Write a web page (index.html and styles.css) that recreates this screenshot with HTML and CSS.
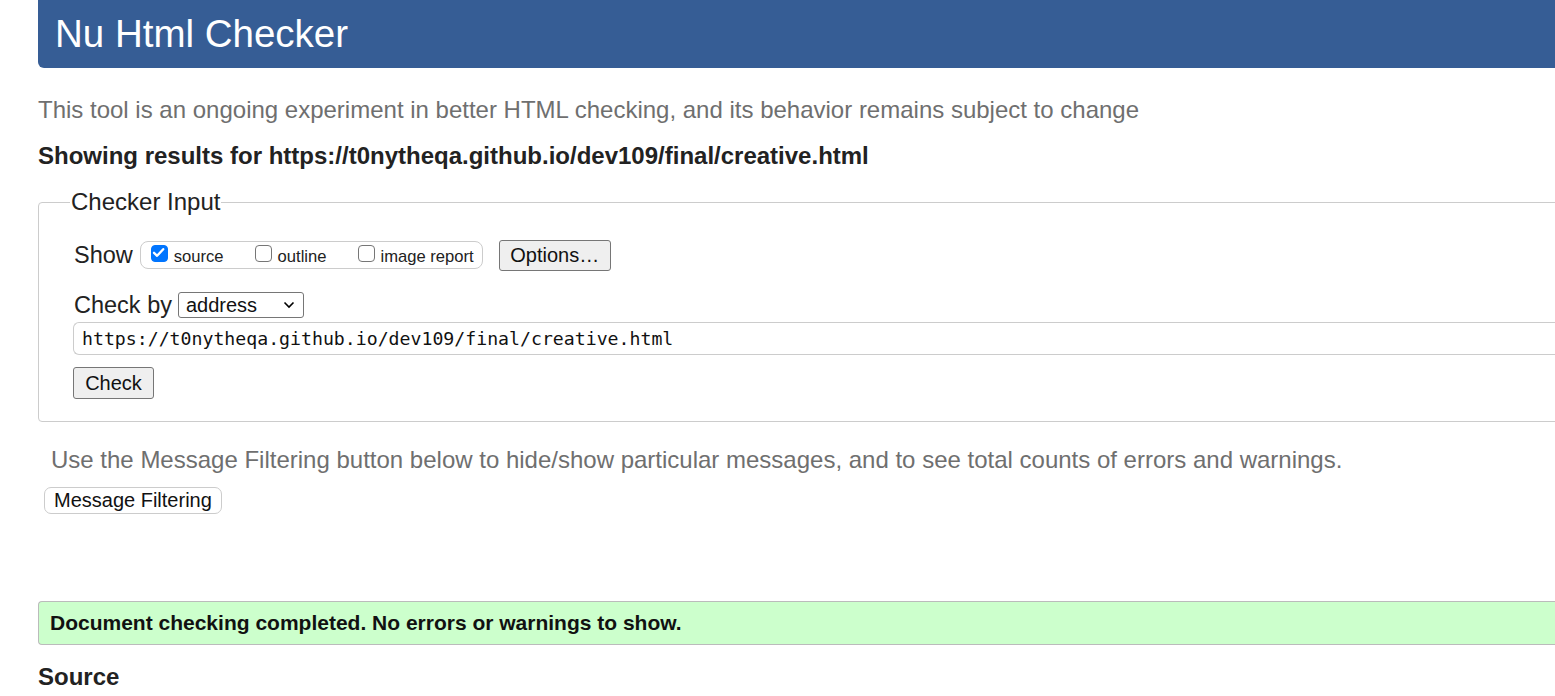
FILE: index.html
```html
<!DOCTYPE html>
<html>
<head>
<meta charset="utf-8">
<title>Nu Html Checker</title>
<link rel="stylesheet" href="styles.css">
</head>
<body>
<div class="page">
  <h1 class="banner">Nu Html Checker</h1>
  <p class="intro">This tool is an ongoing experiment in better HTML checking, and its behavior remains subject to change</p>
  <p class="results">Showing results for https://t0nytheqa.github.io/dev109/final/creative.html</p>
  <fieldset class="checker">
    <legend class="legend">Checker Input</legend>
    <div class="row show-row">
      <span class="lbl">Show</span>
      <span class="opts">
        <label class="opt"><span class="box checked"><svg viewBox="0 0 17 17" width="17" height="17"><path d="M4 8.8 L7.1 11.8 L13.2 5.2" fill="none" stroke="#fff" stroke-width="2.3" stroke-linecap="round" stroke-linejoin="round"/></svg></span>source</label>
        <label class="opt"><span class="box"></span>outline</label>
        <label class="opt"><span class="box"></span>image report</label>
      </span>
      <button class="btn options">Options…</button>
    </div>
    <div class="row by-row">
      <span class="lbl">Check by</span>
      <span class="select">address<svg viewBox="0 0 12 8" width="12" height="8"><path d="M1.5 1.5 L6 6 L10.5 1.5" fill="none" stroke="#000" stroke-width="1.6"/></svg></span>
    </div>
    <div class="url">https://t0nytheqa.github.io/dev109/final/creative.html</div>
    <button class="btn check">Check</button>
  </fieldset>
  <p class="filter-note">Use the Message Filtering button below to hide/show particular messages, and to see total counts of errors and warnings.</p>
  <button class="filter-btn">Message Filtering</button>
  <div class="success">Document checking completed. No errors or warnings to show.</div>
  <h2 class="source">Source</h2>
</div>
</body>
</html>
```

FILE: styles.css
```css
html, body {
  margin: 0;
  padding: 0;
  overflow: hidden;
  background: #fff;
}
body {
  font-family: "Liberation Sans", Arial, sans-serif;
  color: #222;
}
.page {
  padding-left: 38px;
  margin-right: -30px;
}
.banner {
  margin: 0;
  height: 68px;
  box-sizing: border-box;
  padding: 12px 0 0 17px;
  background: #365d95;
  color: #fff;
  font-weight: normal;
  font-size: 38.5px;
  line-height: 44px;
  border-bottom-left-radius: 6px;
}
.intro {
  margin: 27px 0 0 0;
  font-size: 24px;
  line-height: 30px;
  color: #6f6f6f;
}
.results {
  margin: 17px 0 0 0;
  font-size: 24px;
  line-height: 28px;
  font-weight: bold;
  color: #222;
}
.checker {
  margin: 18px 0 0 0;
  padding: 8px 0 22px 35px;
  border: 1px solid #ccc;
  border-radius: 4px;
  min-width: 0;
}
.legend {
  font-size: 24px;
  line-height: 28px;
  padding: 0 1px;
  margin-left: -4px;
  color: #222;
}
.row {
  display: flex;
  align-items: center;
}
.lbl {
  font-size: 23.5px;
  color: #222;
}
.show-row {
  margin-top: 15px;
  height: 32px;
}
.opts {
  display: flex;
  align-items: center;
  margin-left: 7px;
  height: 28px;
  box-sizing: border-box;
  border: 1px solid #ccc;
  border-radius: 8px;
  padding: 0 8px 0 10px;
  gap: 31px;
}
.opt {
  display: flex;
  align-items: center;
  font-size: 16.6px;
  color: #222;
  position: relative;
  top: 2px;
}
.box {
  width: 17px;
  height: 17px;
  box-sizing: border-box;
  border: 1.5px solid #767676;
  border-radius: 4px;
  margin-right: 6px;
  position: relative;
  top: -4px;
  display: flex;
}
.box.checked {
  background: #0075ff;
  border-color: #0075ff;
}
.box.checked svg {
  margin: -1.5px;
  flex: none;
}
.btn {
  font-family: "Liberation Sans", Arial, sans-serif;
  background: #efefef;
  border: 1px solid #767676;
  border-radius: 3px;
  color: #111;
  padding: 0;
}
.options {
  margin-left: 16px;
  width: 112px;
  height: 31px;
  font-size: 20px;
}
.by-row {
  margin-top: 20px;
  height: 28px;
}
.select {
  margin-left: 6px;
  width: 126px;
  height: 26px;
  box-sizing: border-box;
  border: 1px solid #767676;
  border-radius: 3px;
  font-size: 20px;
  line-height: 24px;
  padding-left: 7px;
  display: flex;
  align-items: center;
  justify-content: space-between;
  padding-right: 8px;
  color: #111;
}
.url {
  margin-top: 3px;
  margin-left: -1px;
  height: 33px;
  box-sizing: border-box;
  border: 1px solid #ccc;
  border-right: none;
  border-radius: 6px 0 0 6px;
  padding-left: 8px;
  font-family: "DejaVu Sans Mono", "Liberation Mono", monospace;
  font-size: 18.2px;
  line-height: 31px;
  color: #111;
}
.check {
  margin-top: 12px;
  margin-left: -1px;
  width: 81px;
  height: 32px;
  font-size: 20px;
  display: block;
}
.filter-note {
  margin: 23px 0 0 13px;
  font-size: 24px;
  line-height: 30px;
  color: #6f6f6f;
}
.filter-btn {
  margin: 12px 0 0 6px;
  display: block;
  font-family: "Liberation Sans", Arial, sans-serif;
  font-size: 20px;
  height: 27px;
  padding: 0 9px;
  background: #fff;
  border: 1px solid #ccc;
  border-radius: 7px;
  color: #111;
}
.success {
  margin-top: 87px;
  height: 44px;
  box-sizing: border-box;
  background: #ccffcc;
  border: 1px solid #bbb;
  border-right: none;
  border-radius: 4px 0 0 4px;
  padding-left: 11px;
  font-size: 21px;
  line-height: 42px;
  font-weight: bold;
  color: #111;
}
.source {
  margin: 17px 0 0 0;
  font-size: 24px;
  line-height: 30px;
  font-weight: bold;
  color: #222;
}
```
